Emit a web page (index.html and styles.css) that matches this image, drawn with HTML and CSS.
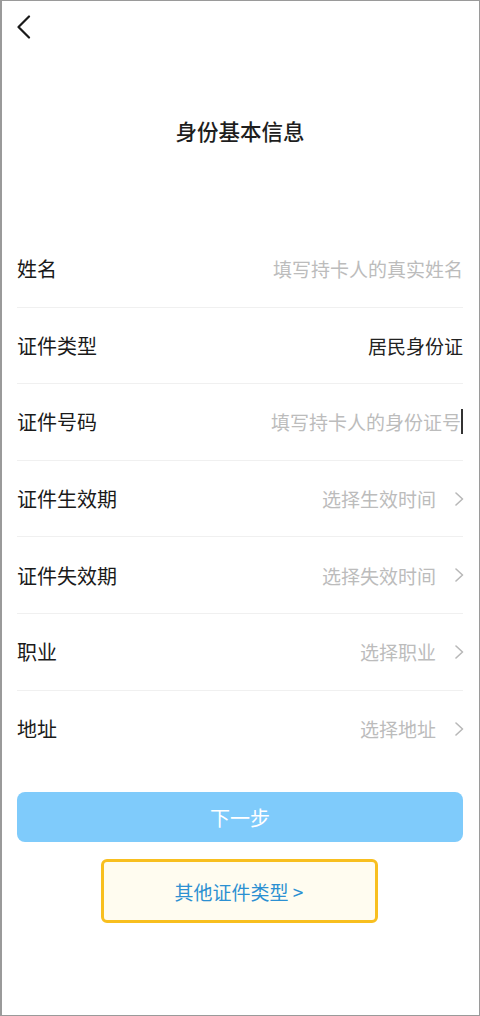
FILE: index.html
```html
<!DOCTYPE html>
<html lang="zh-CN">
<head>
<meta charset="utf-8">
<title>身份基本信息</title>
<link rel="stylesheet" href="styles.css">
</head>
<body>
<div class="screen">
  <div class="topbar">
    <svg class="back" width="14" height="24" viewBox="0 0 14 24"><path d="M12 1.5 L1.5 12 L12 22.5" fill="none" stroke="#1a1a1a" stroke-width="2.2" stroke-linecap="round" stroke-linejoin="round"/></svg>
  </div>
  <h1 class="title">身份基本信息</h1>
  <div class="form">
    <div class="row"><span class="label">姓名</span><span class="value ph">填写持卡人的真实姓名</span></div>
    <div class="row"><span class="label">证件类型</span><span class="value">居民身份证</span></div>
    <div class="row"><span class="label">证件号码</span><span class="value ph">填写持卡人的身份证号<span class="cursor"></span></span></div>
    <div class="row"><span class="label">证件生效期</span><span class="value ph">选择生效时间<svg class="arrow" width="10" height="14" viewBox="0 0 10 14"><path d="M2 1 L8.5 7 L2 13" fill="none" stroke="#b8b8b8" stroke-width="1.6" stroke-linecap="round" stroke-linejoin="round"/></svg></span></div>
    <div class="row"><span class="label">证件失效期</span><span class="value ph">选择失效时间<svg class="arrow" width="10" height="14" viewBox="0 0 10 14"><path d="M2 1 L8.5 7 L2 13" fill="none" stroke="#b8b8b8" stroke-width="1.6" stroke-linecap="round" stroke-linejoin="round"/></svg></span></div>
    <div class="row"><span class="label">职业</span><span class="value ph">选择职业<svg class="arrow" width="10" height="14" viewBox="0 0 10 14"><path d="M2 1 L8.5 7 L2 13" fill="none" stroke="#b8b8b8" stroke-width="1.6" stroke-linecap="round" stroke-linejoin="round"/></svg></span></div>
    <div class="row last"><span class="label">地址</span><span class="value ph">选择地址<svg class="arrow" width="10" height="14" viewBox="0 0 10 14"><path d="M2 1 L8.5 7 L2 13" fill="none" stroke="#b8b8b8" stroke-width="1.6" stroke-linecap="round" stroke-linejoin="round"/></svg></span></div>
  </div>
  <div class="actions">
    <div class="btn-next">下一步</div>
    <div class="btn-other">其他证件类型 &gt;</div>
  </div>
</div>
</body>
</html>
```
FILE: styles.css
```css
* { box-sizing: border-box; }
html, body { margin: 0; padding: 0; background: #fff; }
body {
  font-family: "Noto Sans CJK SC", "Noto Sans", sans-serif;
  color: #1a1a1a;
}
.screen {
  width: 480px;
  height: 1016px;
  border: 1px solid #9a9a9a;
  border-left-width: 2px;
  padding: 0 16px 0 15px;
  overflow: hidden;
}
.topbar {
  height: 52px;
  display: flex;
  align-items: center;
}
.back { display: block; }
.title {
  margin: 63px 0 0;
  font-size: 21.5px;
  line-height: 30px;
  font-weight: 500;
  text-align: center;
  color: #1e1e1e;
}
.form { margin-top: 85px; }
.row {
  height: 76.6px;
  border-bottom: 1px solid #f0f0f0;
  display: flex;
  align-items: center;
  justify-content: space-between;
}
.row.last { border-bottom: none; }
.label { font-size: 20px; color: #1a1a1a; }
.value {
  display: flex;
  align-items: center;
  font-size: 19px;
  color: #222;
}
.value.ph { color: #bcbcbc; }
.arrow { display: block; margin-left: 18px; margin-right: -1px; }
.cursor {
  display: inline-block;
  width: 2px;
  height: 25px;
  background: #333;
}
.actions {
  margin-top: 25px;
  display: flex;
  flex-direction: column;
  align-items: center;
}
.btn-next {
  width: 100%;
  height: 50px;
  border-radius: 8px;
  background: #7fcbfb;
  color: #fff;
  font-size: 20px;
  display: flex;
  align-items: center;
  justify-content: center;
}
.btn-other {
  margin-top: 17px;
  margin-right: 2px;
  width: 277px;
  height: 64px;
  border: 3px solid #f8bf1f;
  border-radius: 6px;
  background: #fffcf0;
  color: #2c90d2;
  font-size: 19px;
  display: flex;
  align-items: center;
  justify-content: center;
}
```
